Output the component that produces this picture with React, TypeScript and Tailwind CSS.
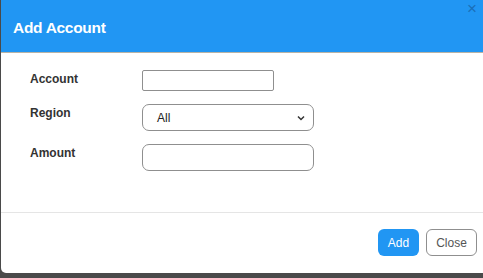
const App = () => {
  return (
    <div className="h-[278px] w-[483px] overflow-hidden bg-[#4a4a4a] pl-px font-['Liberation_Sans',Arial,sans-serif]">
      <div className="flex h-[273px] w-[500px] flex-col overflow-hidden rounded-b-[5px] bg-white">
        <div className="relative flex h-[53px] items-center border-b border-[#b8b3a6] bg-[#2196f3] pl-3 pt-[3px]">
          <h1 className="text-[15.5px] font-bold tracking-[-0.3px] text-white">Add Account</h1>
          <span className="absolute left-[466px] top-0 text-[17px] leading-[18px] text-[#1a6fb8]">×</span>
        </div>
        <div className="flex h-[160px] flex-col gap-[13px] border-b border-[#e5e5e5] pl-[29px] pt-[17px]">
          <div className="flex items-start">
            <label className="w-[112px] text-[12px] font-bold text-[#333]">Account</label>
            <input className="h-[21px] w-[132px] rounded-[2px] border border-[#8f8f8f] bg-white" />
          </div>
          <div className="flex items-start">
            <label className="w-[112px] text-[12px] font-bold text-[#333]">Region</label>
            <div className="relative flex h-[27px] w-[172px] items-center rounded-[7px] border border-[#8f8f8f] pl-[14px] text-[12px] text-[#222]">
              All
              <svg className="absolute right-[8px] top-[10px]" width="8" height="6" viewBox="0 0 8 6" fill="none">
                <path d="M1 1.5 L4 4.5 L7 1.5" stroke="#333" strokeWidth="1.5" />
              </svg>
            </div>
          </div>
          <div className="flex items-start">
            <label className="w-[112px] text-[12px] font-bold text-[#333]">Amount</label>
            <input className="h-[27px] w-[172px] rounded-[7px] border border-[#8f8f8f] bg-white" />
          </div>
        </div>
        <div className="flex items-center gap-[7px] pl-[377px] pt-[16px]">
          <button className="h-[27px] w-[41px] rounded-[6px] bg-[#2196f3] text-[12px] text-white">Add</button>
          <button className="h-[27px] w-[51px] rounded-[6px] border border-[#8f8f8f] bg-white text-[12px] text-[#555]">Close</button>
        </div>
      </div>
    </div>
  );
};

export default App;
